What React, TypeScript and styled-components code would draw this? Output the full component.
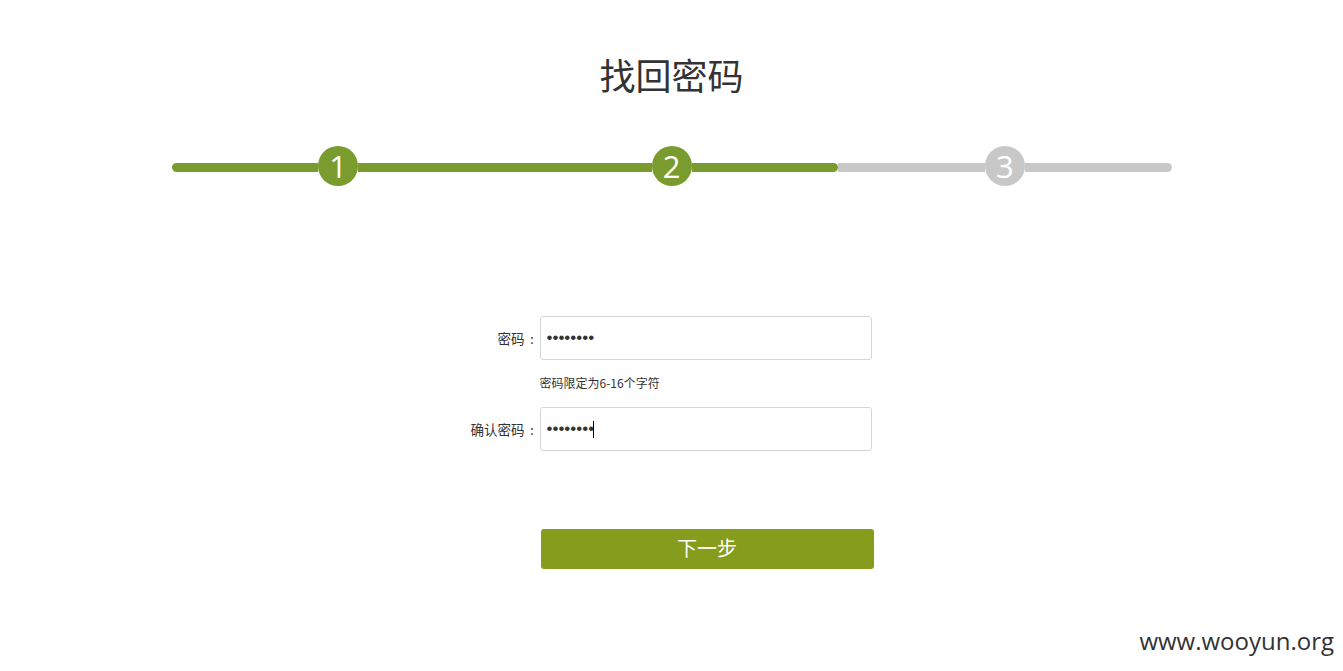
import React from "react";
import styled, { createGlobalStyle } from "styled-components";

const GlobalStyle = createGlobalStyle`
  html, body {
    margin: 0;
    padding: 0;
    background: #ffffff;
    font-family: "Noto Sans CJK SC", "Noto Sans", sans-serif;
    color: #333333;
  }
`;

const Page = styled.div`
  position: relative;
  width: 100%;
  min-height: 671px;
  display: flex;
  flex-direction: column;
  align-items: center;
`;

const Title = styled.h1`
  margin: 54px 0 0;
  font-size: 36px;
  line-height: 40px;
  font-weight: 400;
  color: #333333;
`;

const Steps = styled.div`
  margin-top: 52px;
  width: 1000px;
  display: grid;
  grid-template-columns: repeat(3, 1fr);
`;

const Segment = styled.div`
  display: flex;
  align-items: center;
  height: 40px;
`;

const Line = styled.div<{ $on: boolean; $round?: "left" | "right" }>`
  flex: 1;
  height: 9px;
  margin-top: 2px;
  background: ${(p) => (p.$on ? "#7a9c2f" : "#c8c8c8")};
  border-radius: ${(p) =>
    p.$round === "left" ? "5px 0 0 5px" : p.$round === "right" ? "0 5px 5px 0" : "0"};
`;

const Circle = styled.div<{ $on: boolean }>`
  width: 40px;
  height: 40px;
  border-radius: 50%;
  background: ${(p) => (p.$on ? "#7a9c2f" : "#c8c8c8")};
  color: #ffffff;
  display: flex;
  align-items: center;
  justify-content: center;
  font-family: "Open Sans", "Noto Sans", sans-serif;
  font-size: 31px;
  font-weight: 400;
  line-height: 1;
`;

const Form = styled.form`
  margin-top: 130px;
  width: 1000px;
  display: grid;
  grid-template-columns: 368px 332px;
  align-items: center;
`;

const Label = styled.label`
  display: flex;
  justify-content: flex-end;
  align-items: center;
  padding-right: 0;
  font-size: 13.5px;
  color: #333333;
`;

const Colon = styled.span`
  display: inline-block;
  width: 15px;
  text-align: center;
`;

const Field = styled.div`
  position: relative;
  width: 332px;
  height: 44px;
`;

const Input = styled.input`
  box-sizing: border-box;
  width: 332px;
  height: 44px;
  border: 1px solid #d6d6d6;
  border-radius: 3px;
  padding: 0 6px;
  font-size: 17px;
  color: #333333;
  outline: none;
  font-family: "Liberation Sans", sans-serif;
`;

const Caret = styled.span`
  position: absolute;
  left: 53px;
  top: 14px;
  width: 1px;
  height: 17px;
  background: #000;
`;

const Hint = styled.div`
  grid-column: 2;
  font-size: 12px;
  line-height: 16px;
  color: #333333;
  margin: 15px 0 16px;
`;

const ButtonRow = styled.div`
  grid-column: 2;
  margin-top: 78px;
  padding-left: 1px;
`;

const Button = styled.button`
  width: 333px;
  height: 40px;
  border: none;
  border-radius: 3px;
  background: #869c1d;
  color: #ffffff;
  font-family: "Noto Sans CJK SC", sans-serif;
  font-size: 20px;
  line-height: 36px;
  cursor: pointer;
  padding: 0 0 2px;
`;

const Watermark = styled.div`
  position: absolute;
  right: 9px;
  top: 624px;
  font-family: "Open Sans", "Noto Sans", sans-serif;
  font-size: 24px;
  color: #333333;
  line-height: 34px;
`;

export default function App() {
  const steps = [1, 2, 3];
  const done = 2;
  return (
    <>
      <GlobalStyle />
      <Page>
        <Title>找回密码</Title>
        <Steps>
          {steps.map((n, i) => {
            const on = n <= done;
            return (
              <Segment key={n}>
                <Line $on={on} $round={i === 0 ? "left" : undefined} />
                <Circle $on={on}>{n}</Circle>
                <Line $on={on} $round={i === 2 || n === done ? "right" : undefined} />
              </Segment>
            );
          })}
        </Steps>
        <Form onSubmit={(e) => e.preventDefault()}>
          <Label htmlFor="pwd">
            密码<Colon>:</Colon>
          </Label>
          <Field>
            <Input id="pwd" type="password" defaultValue="12345678" />
          </Field>
          <Hint>密码限定为6-16个字符</Hint>
          <Label htmlFor="pwd2">
            确认密码<Colon>:</Colon>
          </Label>
          <Field>
            <Input id="pwd2" type="password" defaultValue="12345678" />
            <Caret />
          </Field>
          <ButtonRow>
            <Button type="button">下一步</Button>
          </ButtonRow>
        </Form>
        <Watermark>www.wooyun.org</Watermark>
      </Page>
    </>
  );
}
